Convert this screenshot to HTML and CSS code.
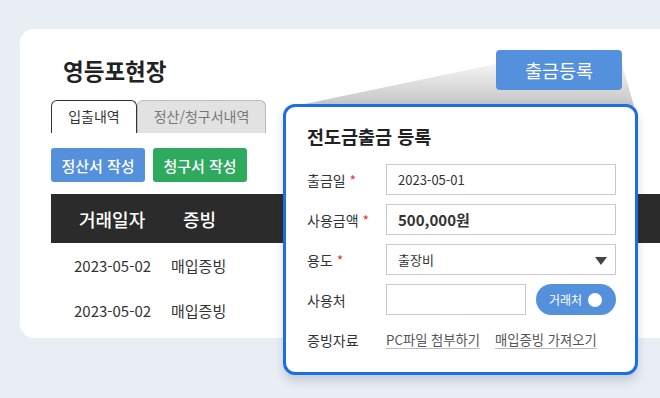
FILE: index.html
```html
<!DOCTYPE html>
<html lang="ko">

<head>
  <meta charset="UTF-8">
  <meta name="viewport" content="width=device-width, initial-scale=1.0">
  <title>영등포현장</title>
  <link rel="stylesheet" href="styles.css">
</head>

<body>
  <div class="card">
    <h1 class="site-title">영등포현장</h1>
    <div class="tabs">
      <div class="tab active">입출내역</div>
      <div class="tab">정산/청구서내역</div>
    </div>
    <div class="actions">
      <button class="btn btn-blue">정산서 작성</button>
      <button class="btn btn-green">청구서 작성</button>
    </div>
    <div class="list">
      <div class="list-head">
        <span class="col-date">거래일자</span>
        <span class="col-kind">증빙</span>
      </div>
      <div class="list-row">
        <span class="col-date">2023-05-02</span>
        <span class="col-kind">매입증빙</span>
      </div>
      <div class="list-row">
        <span class="col-date">2023-05-02</span>
        <span class="col-kind">매입증빙</span>
      </div>
    </div>
  </div>

  <!-- callout beam from the button to the popup -->
  <svg class="beam" width="660" height="398" viewBox="0 0 660 398">
    <defs>
      <linearGradient id="beamFill" x1="0" y1="0" x2="0" y2="1">
        <stop offset="0" stop-color="#f4f4f4" />
        <stop offset="1" stop-color="#c4c4c4" />
      </linearGradient>
    </defs>
    <polygon points="295,106 496,64 622,64 634,106" fill="url(#beamFill)" />
  </svg>

  <button class="callout-btn">출금등록</button>

  <div class="popup">
    <h2 class="popup-title">전도금출금 등록</h2>
    <div class="form-row">
      <label>출금일 <em>*</em></label>
      <div class="field">2023-05-01</div>
    </div>
    <div class="form-row">
      <label>사용금액 <em>*</em></label>
      <div class="field strong">500,000원</div>
    </div>
    <div class="form-row">
      <label>용도 <em>*</em></label>
      <div class="field select">출장비<span class="caret"></span></div>
    </div>
    <div class="form-row">
      <label>사용처</label>
      <div class="field short"></div>
      <div class="toggle">거래처<span class="knob"></span></div>
    </div>
    <div class="form-row links">
      <label>증빙자료</label>
      <a href="#">PC파일 첨부하기</a>
      <a href="#">매입증빙 가져오기</a>
    </div>
  </div>
</body>

</html>
```

FILE: styles.css
```css
body {
  margin: 0;
  width: 660px;
  height: 398px;
  overflow: hidden;
  background-color: #e9eef5;
  font-family: "Noto Sans CJK KR", "Noto Sans", sans-serif;
  color: #333;
  position: relative;
}

.card {
  margin: 29px 0 0 20px;
  width: 660px;
  height: 309px;
  box-sizing: border-box;
  padding-left: 31px;
  background-color: #fff;
  border-radius: 14px 0 0 14px;
  overflow: hidden;
}

.site-title {
  margin: 0;
  padding: 26px 0 0 12px;
  font-size: 22.5px;
  line-height: 30px;
  font-weight: 700;
  color: #222;
}

.tabs {
  display: flex;
  margin-top: 15px;
  height: 33px;
}

.tab {
  box-sizing: border-box;
  height: 33px;
  padding: 0;
  border: 1px solid #bbb;
  border-bottom: none;
  border-radius: 6px 6px 0 0;
  background-color: #e2e2e2;
  color: #777;
  font-size: 14px;
  line-height: 31px;
  width: 129px;
  text-align: center;
}

.tab.active {
  width: 86px;
  background-color: #fff;
  border-color: #333;
  color: #333;
}

.actions {
  display: flex;
  gap: 8px;
  margin-top: 15px;
}

.btn {
  width: 94px;
  height: 34px;
  border: none;
  border-radius: 3px;
  color: #fff;
  font-family: inherit;
  font-size: 15px;
  font-weight: 500;
  padding: 0;
}

.btn-blue {
  background-color: #5590dd;
}

.btn-green {
  background-color: #2daa5e;
}

.list {
  margin-top: 12px;
}

.list-head {
  display: flex;
  align-items: center;
  height: 49px;
  background-color: #2b2b2b;
  color: #fff;
  font-size: 18px;
  font-weight: 500;
}

.list-head .col-date {
  width: 104px;
  padding-left: 28px;
}

.list-row {
  display: flex;
  align-items: center;
  height: 45px;
  font-size: 15px;
  color: #333;
}

.list-row .col-date {
  width: 97px;
  padding-left: 23px;
}

.beam {
  position: absolute;
  top: 0;
  left: 0;
}

.callout-btn {
  position: absolute;
  left: 496px;
  top: 50px;
  width: 126px;
  height: 40px;
  border: none;
  border-radius: 4px;
  background-color: #5590dd;
  color: #fff;
  font-family: inherit;
  font-size: 18.5px;
  padding: 0;
}

.popup {
  position: absolute;
  left: 283px;
  top: 104px;
  width: 355px;
  height: 271px;
  box-sizing: border-box;
  border: 3px solid #1c6fe3;
  border-radius: 12px;
  background-color: #fff;
  box-shadow: 0 6px 10px rgba(40, 50, 70, 0.18);
  padding: 15px 19px 0 21px;
}

.popup-title {
  margin: 0 0 14px;
  font-size: 18.5px;
  line-height: 28px;
  font-weight: 700;
  color: #222;
}

.form-row {
  display: flex;
  align-items: center;
  height: 31px;
  margin-bottom: 9px;
}

.form-row label {
  width: 79px;
  flex-shrink: 0;
  font-size: 14px;
  color: #333;
}

.form-row em {
  font-style: normal;
  color: #e53935;
}

.field {
  box-sizing: border-box;
  width: 230px;
  height: 31px;
  border: 1px solid #c8c8c8;
  padding-left: 11px;
  font-size: 13px;
  line-height: 29px;
  color: #333;
  position: relative;
}

.field.strong {
  font-size: 15px;
  font-weight: 700;
}

.field.short {
  width: 140px;
}

.caret {
  position: absolute;
  right: 8px;
  top: 12px;
  border-left: 6px solid transparent;
  border-right: 6px solid transparent;
  border-top: 8px solid #444;
}

.toggle {
  box-sizing: border-box;
  margin-left: 10px;
  width: 80px;
  height: 31px;
  border-radius: 16px;
  background-color: #5590dd;
  color: #fff;
  font-size: 12px;
  display: flex;
  align-items: center;
  padding-left: 13px;
  gap: 6px;
}

.knob {
  width: 14px;
  height: 14px;
  border-radius: 50%;
  background-color: #fff;
}

.form-row.links {
  margin-top: 3px;
}

.links a {
  font-size: 13.3px;
  color: #555;
  text-decoration: underline;
  text-decoration-color: #bbb;
  text-underline-offset: 3px;
  margin-right: 15px;
}
```
